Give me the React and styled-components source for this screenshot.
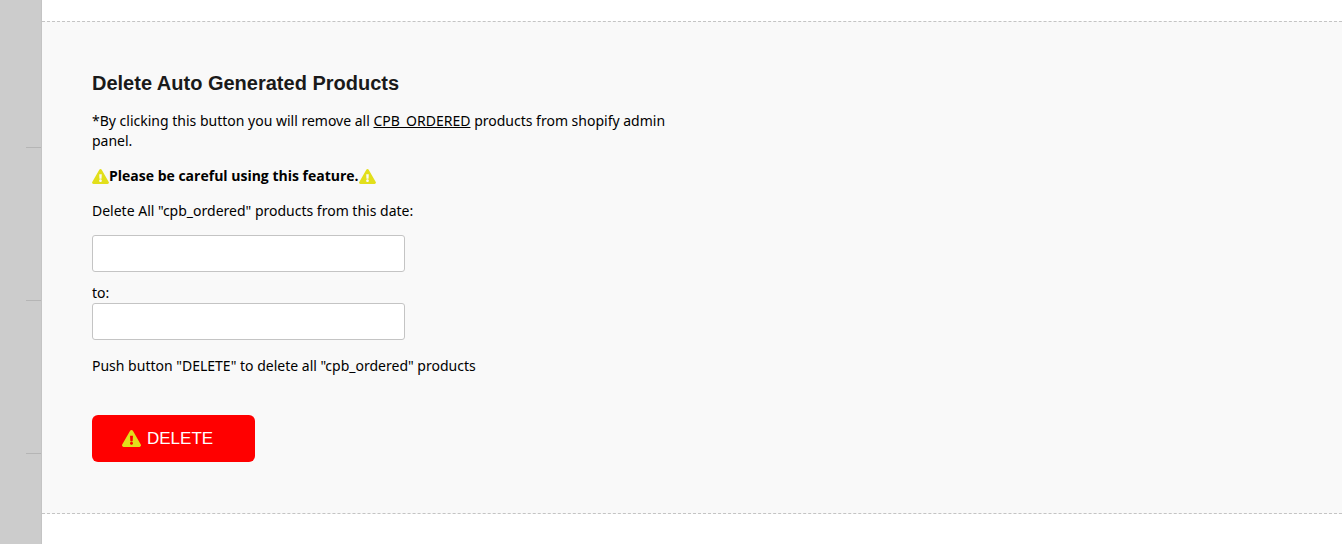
import React from "react";
import styled, { createGlobalStyle } from "styled-components";
import { FaExclamationTriangle } from "react-icons/fa";

const GlobalStyle = createGlobalStyle`
  *, *::before, *::after { box-sizing: border-box; }
  body {
    margin: 0;
    background: #fff;
    color: #000;
    font: 14px/20px "Segoe UI", "Noto Sans", "Open Sans", sans-serif;
  }
`;

const Page = styled.div`
  display: flex;
  min-height: 100vh;
`;

const Sidebar = styled.aside`
  flex: 0 0 42px;
  padding-left: 26px;
  background: #ccc;
  border-right: 1px solid #c4c4c4;
`;

const SidebarItem = styled.div`
  height: ${({ $first }) => ($first ? 148 : 153)}px;
  border-bottom: 1px solid #b5b5b5;
`;

const Main = styled.main`
  flex: 1;
  min-width: 0;
  padding: 21px 0 30px;
`;

const Section = styled.section`
  padding: 50px 50px 51px;
  background: #f9f9f9;
  border: 1px dashed #c4c4c4;
  border-width: 1px 0;
`;

const Content = styled.form`
  max-width: 600px;
`;

const Title = styled.h2`
  margin: 0 0 17px;
  color: #1a1a1a;
  font: bold 20px/22px "Liberation Sans", Arial, sans-serif;
`;

const Text = styled.p`
  margin: 0 0 15px;
`;

const Warning = styled.p`
  display: flex;
  align-items: center;
  margin: 0 0 15px;
  font-family: "Segoe UI", "Open Sans", sans-serif;
  font-weight: bold;
`;

const WarningIcon = styled(FaExclamationTriangle)`
  flex: none;
  width: ${({ $large }) => ($large ? 19 : 17)}px;
  height: ${({ $large }) => ($large ? 17 : 15)}px;
  color: #e2df1b;
`;

const Label = styled.label`
  display: block;
  margin-bottom: ${({ $gap }) => $gap || 0}px;
`;

const DateInput = styled.input`
  display: block;
  width: 313px;
  height: 37px;
  margin-bottom: ${({ $gap }) => $gap}px;
  padding: 0 10px;
  background: #fff;
  border: 1px solid #c4c4c4;
  border-radius: 3px;
  font: inherit;
`;

const DeleteButton = styled.button`
  display: flex;
  align-items: center;
  gap: 6px;
  width: 163px;
  height: 47px;
  margin-top: 39px;
  padding: 0 30px;
  background: #f00;
  border: 0;
  border-radius: 6px;
  color: #fff;
  font: 17px/20px "Liberation Sans", Arial, sans-serif;
  cursor: pointer;
`;

export default function App() {
  return (
    <>
      <GlobalStyle />
      <Page>
        <Sidebar>
          <SidebarItem $first />
          <SidebarItem />
          <SidebarItem />
        </Sidebar>
        <Main>
          <Section>
            <Content onSubmit={(event) => event.preventDefault()}>
              <Title>Delete Auto Generated Products</Title>
              <Text>
                *By clicking this button you will remove all <u>CPB_ORDERED</u>{" "}
                products from shopify admin panel.
              </Text>
              <Warning>
                <WarningIcon aria-hidden />
                Please be careful using this feature.
                <WarningIcon aria-hidden />
              </Warning>
              <Label htmlFor="date-from" $gap={14}>
                Delete All "cpb_ordered" products from this date:
              </Label>
              <DateInput id="date-from" type="text" $gap={11} />
              <Label htmlFor="date-to">to:</Label>
              <DateInput id="date-to" type="text" $gap={16} />
              <Text>Push button "DELETE" to delete all "cpb_ordered" products</Text>
              <DeleteButton type="submit">
                <WarningIcon $large aria-hidden />
                DELETE
              </DeleteButton>
            </Content>
          </Section>
        </Main>
      </Page>
    </>
  );
}
